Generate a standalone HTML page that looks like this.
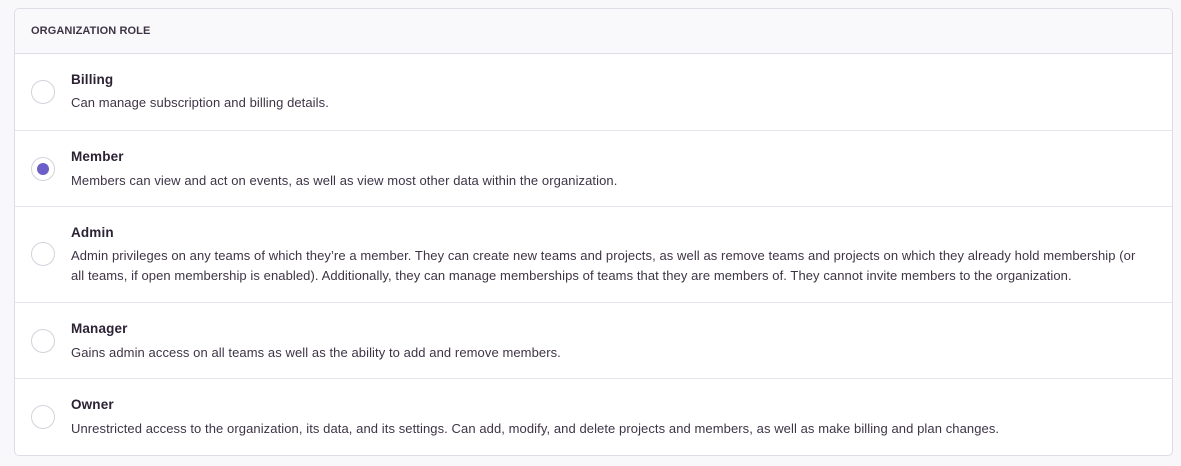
<!DOCTYPE html>
<html><head><style>
body{margin:0;background:#f8f8fa;font-family:"Liberation Sans",sans-serif;width:1181px;height:466px;overflow:hidden}
.p{position:absolute;left:14px;top:8px;width:1159px;height:448px;background:#fff;border:1px solid #e0dce5;border-radius:5px;box-sizing:border-box;overflow:hidden}
.h{height:45px;background:#f9f9fb;border-bottom:1px solid #e0dce5;box-sizing:border-box;font-size:11px;font-weight:bold;color:#3e3446;padding-left:16px;line-height:44px;letter-spacing:.1px}
.r{position:relative;border-bottom:1px solid #e7e4eb;box-sizing:border-box}
.r:last-child{border-bottom:none}
.rad{position:absolute;left:16px;width:24px;height:24px;border:1px solid #d6d0dc;border-radius:50%;box-sizing:border-box;background:#fff}
.rad.on::after{content:"";position:absolute;left:5px;top:5px;width:12px;height:12px;border-radius:50%;background:#6c5fc7}
.t{position:absolute;left:56px;font-size:13.5px;font-weight:bold;color:#2b2233;letter-spacing:.15px}
.d{position:absolute;left:56px;font-size:13px;color:#3e3446;line-height:20px;white-space:nowrap;letter-spacing:.08px}
</style></head><body>
<div class="p">
<div class="h">ORGANIZATION ROLE</div>
<div class="r" style="height:77px"><div class="rad" style="top:26px"></div><div class="t" style="top:18px">Billing</div><div class="d" style="top:39px">Can manage subscription and billing details.</div></div>
<div class="r" style="height:76px"><div class="rad on" style="top:26px"></div><div class="t" style="top:18px">Member</div><div class="d" style="top:40px">Members can view and act on events, as well as view most other data within the organization.</div></div>
<div class="r" style="height:96px"><div class="rad" style="top:35px"></div><div class="t" style="top:18px">Admin</div><div class="d" style="top:39px">Admin privileges on any teams of which they’re a member. They can create new teams and projects, as well as remove teams and projects on which they already hold membership (or<br>all teams, if open membership is enabled). Additionally, they can manage memberships of teams that they are members of. They cannot invite members to the organization.</div></div>
<div class="r" style="height:76px"><div class="rad" style="top:26px"></div><div class="t" style="top:18px">Manager</div><div class="d" style="top:40px">Gains admin access on all teams as well as the ability to add and remove members.</div></div>
<div class="r" style="height:77px"><div class="rad" style="top:26px"></div><div class="t" style="top:18px">Owner</div><div class="d" style="top:40px">Unrestricted access to the organization, its data, and its settings. Can add, modify, and delete projects and members, as well as make billing and plan changes.</div></div>
</div>
</body></html>
